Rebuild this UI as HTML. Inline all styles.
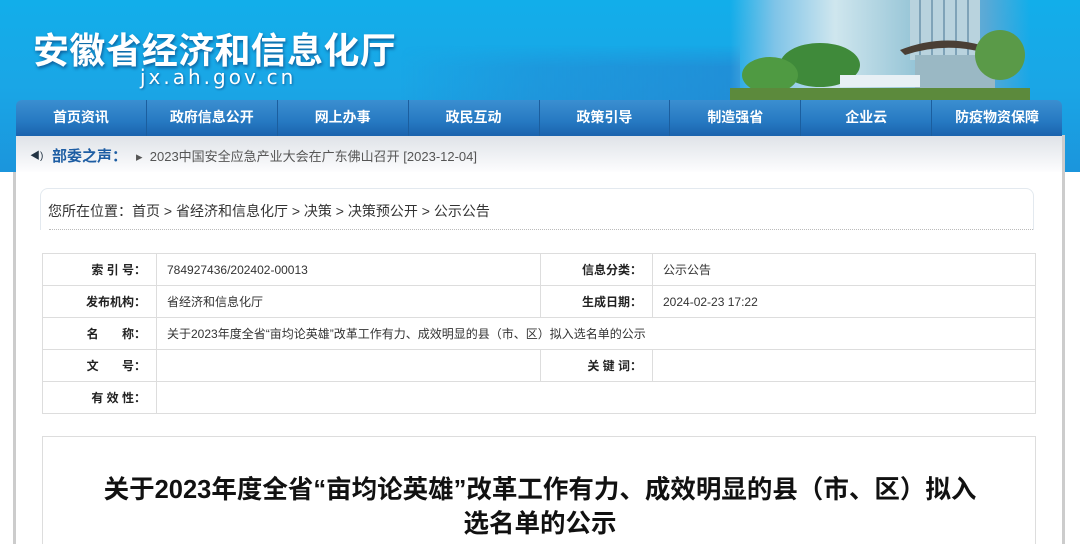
<!DOCTYPE html>
<html><head><meta charset="utf-8"><style>
*{margin:0;padding:0;box-sizing:border-box}
html,body{width:1080px;height:544px;overflow:hidden}
body{background:#fff;font-family:"Liberation Sans","Noto Sans CJK SC",sans-serif;position:relative}
.top{position:absolute;left:0;top:0;width:1080px;height:172px;background:linear-gradient(180deg,#12aeea 0%,#1aa6e6 50%,#1b95dc 100%)}
.city{position:absolute;left:400px;top:45px;width:340px;height:55px;background:linear-gradient(90deg,rgba(40,120,200,0),rgba(40,120,200,.3) 40%,rgba(40,120,200,.5));-webkit-mask-image:linear-gradient(180deg,transparent,#000 40%)}
.photo{position:absolute;left:730px;top:0;width:300px;height:100px;background:linear-gradient(90deg,rgba(30,150,220,0) 0%,#7fc4e8 15%,#cfe6ee 35%,#9ac7d8 60%,#5aa9d6 85%,rgba(30,150,220,0) 100%)}
.logo{position:absolute;left:33px;top:22px;color:#fff;font-size:36px;font-weight:bold;letter-spacing:.3px;text-shadow:1px 2px 3px rgba(0,0,60,.45)}
.url{position:absolute;left:140px;top:65px;color:#fff;font-size:20px;letter-spacing:3px;font-family:"DejaVu Sans",sans-serif;text-shadow:1px 1px 2px rgba(0,0,60,.4)}
.wrapL{position:absolute;left:13px;top:172px;width:3px;height:372px;background:#ccc}
.wrapR{position:absolute;left:1062px;top:135px;width:3px;height:409px;background:#ccc}
.nav{position:absolute;left:16px;top:100px;width:1046px;height:36px;background:linear-gradient(180deg,#3b8fd0 0%,#2679c2 60%,#1a63ad 100%);border-radius:6px 6px 0 0;display:flex}
.nav div{flex:1;color:#fff;font-weight:bold;font-size:14px;text-align:center;line-height:34px;border-left:1px solid #1b5e9e}
.nav div:first-child{border-left:none}
.tick{position:absolute;left:16px;top:136px;width:1046px;height:36px;background:linear-gradient(180deg,#dfe3e8,#fdfdfe)}
.tick .ic{position:absolute;left:14px;top:11px;font-size:10px;color:#234}
.tick .t{position:absolute;left:36px;top:9px;color:#1d5da3;font-weight:bold;font-size:15px}
.tick .n{position:absolute;left:120px;top:10px;color:#555;font-size:13px}
.crumb{position:absolute;left:40px;top:188px;width:994px;height:42px;border:1px solid #e3e9ef;border-bottom:none;border-radius:8px 8px 0 0;}
.crumb:after{content:"";position:absolute;left:8px;right:0;bottom:0;border-bottom:1px dotted #bbb}
.crumb span{position:absolute;left:7px;top:12px;font-size:14px;color:#333}
table{position:absolute;left:42px;top:253px;width:994px;border-collapse:collapse;font-size:12px;color:#333}
td{border:1px solid #ddd;height:32px;padding:0 10px}
td.l{width:114px;text-align:right;font-weight:bold;color:#222}
td.l2{width:112px;text-align:right;font-weight:bold;color:#222}
td.v{width:384px}
.art{position:absolute;left:42px;top:436px;width:994px;height:120px;border:1px solid #ddd}
.art h1{position:absolute;left:0;width:994px;top:36px;text-align:center;font-size:25.5px;line-height:34px;font-weight:bold;color:#111;white-space:nowrap}
</style></head><body>
<div class="top"></div>
<div class="city"></div>
<div class="photo">
<svg width="300" height="100" style="position:absolute;left:0;top:0">
<rect x="180" y="0" width="70" height="60" fill="#b9d3de"/>
<g stroke="#7fa3b8" stroke-width="2"><line x1="190" y1="0" x2="190" y2="60"/><line x1="202" y1="0" x2="202" y2="60"/><line x1="214" y1="0" x2="214" y2="60"/><line x1="226" y1="0" x2="226" y2="60"/><line x1="238" y1="0" x2="238" y2="60"/></g>
<path d="M170 50 Q220 30 270 52 L265 56 Q220 40 175 55Z" fill="#4a3f35"/>
<rect x="185" y="55" width="80" height="38" fill="#9ab8c4"/>
<ellipse cx="90" cy="65" rx="40" ry="22" fill="#3f8a3a"/>
<ellipse cx="40" cy="75" rx="28" ry="18" fill="#4f9a42"/>
<ellipse cx="270" cy="55" rx="25" ry="25" fill="#5a9a48"/>
<rect x="110" y="75" width="80" height="12" fill="#e8f0f5"/>
<rect x="0" y="88" width="300" height="12" fill="#5c8a3c"/>
</svg></div>
<div class="logo">安徽省经济和信息化厅</div>
<div class="url">jx.ah.gov.cn</div>
<div class="nav"><div>首页资讯</div><div>政府信息公开</div><div>网上办事</div><div>政民互动</div><div>政策引导</div><div>制造强省</div><div>企业云</div><div>防疫物资保障</div></div>
<div class="tick"><span class="ic">◀)</span><span class="t">部委之声：</span><span class="n">▸&nbsp;&nbsp;2023中国安全应急产业大会在广东佛山召开 [2023-12-04]</span></div>
<div class="wrapL"></div><div class="wrapR"></div>
<div class="crumb"><span>您所在位置：首页 &gt; 省经济和信息化厅 &gt; 决策 &gt; 决策预公开 &gt; 公示公告</span></div>
<table>
<tr><td class="l">索 引 号：</td><td class="v">784927436/202402-00013</td><td class="l2">信息分类：</td><td>公示公告</td></tr>
<tr><td class="l">发布机构：</td><td class="v">省经济和信息化厅</td><td class="l2">生成日期：</td><td>2024-02-23 17:22</td></tr>
<tr><td class="l">名&nbsp;&nbsp;&nbsp;&nbsp;&nbsp;&nbsp;&nbsp;称：</td><td colspan="3">关于2023年度全省“亩均论英雄”改革工作有力、成效明显的县（市、区）拟入选名单的公示</td></tr>
<tr><td class="l">文&nbsp;&nbsp;&nbsp;&nbsp;&nbsp;&nbsp;&nbsp;号：</td><td class="v"></td><td class="l2">关 键 词：</td><td></td></tr>
<tr><td class="l">有 效 性：</td><td colspan="3"></td></tr>
</table>
<div class="art"><h1>关于2023年度全省“亩均论英雄”改革工作有力、成效明显的县（市、区）拟入<br>选名单的公示</h1></div>
</body></html>
